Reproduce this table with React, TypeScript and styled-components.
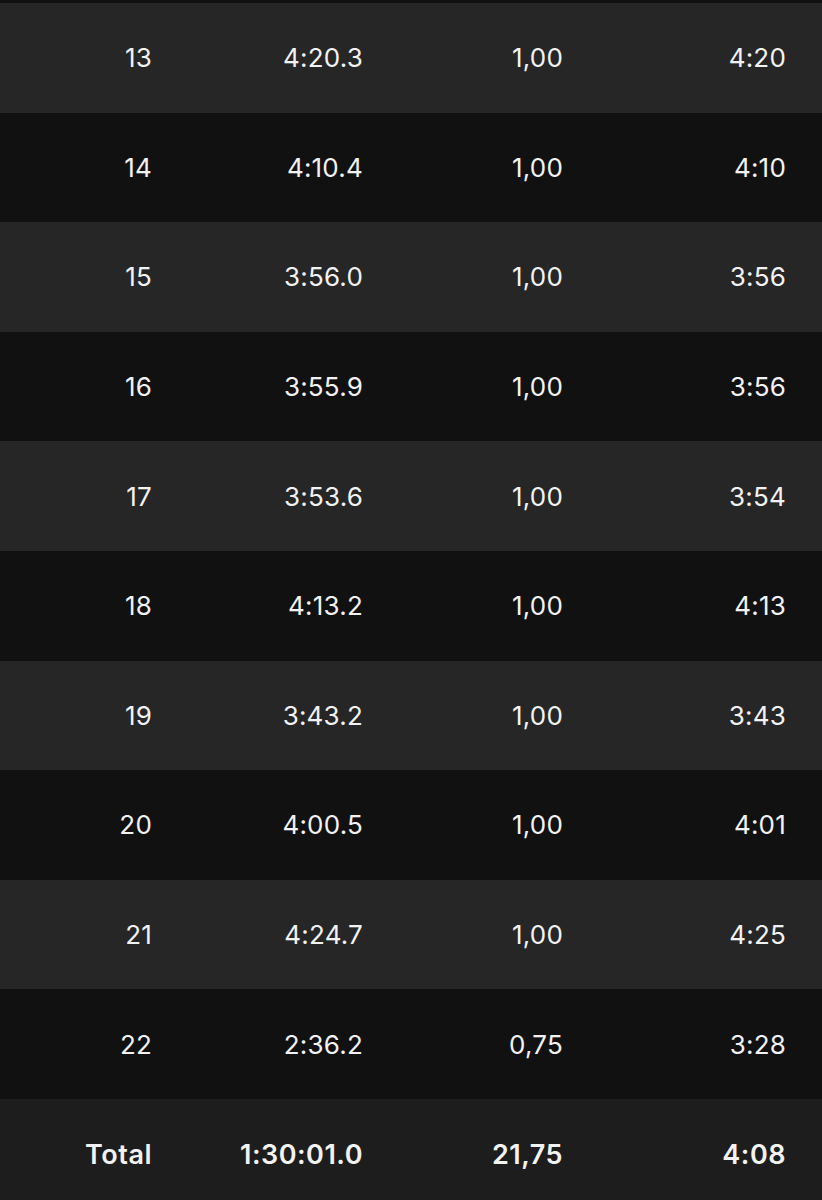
import React from 'react';
import styled, { createGlobalStyle } from 'styled-components';

const GlobalStyle = createGlobalStyle`
  html, body {
    margin: 0;
    padding: 0;
    background: #111111;
  }
  body {
    font-family: Inter, "Liberation Sans", sans-serif;
    -webkit-font-smoothing: antialiased;
  }
`;

const Table = styled.div`
  width: 822px;
  height: 1200px;
  overflow: hidden;
  padding-top: 3px;
  box-sizing: border-box;
  background: #111111;
`;

const Row = styled.div<{ $shade: 'light' | 'dark' | 'total' }>`
  display: grid;
  grid-template-columns: 152px 211px 200px 223px;
  align-items: center;
  height: ${({ $shade }) => ($shade === 'total' ? '112px' : '109.6px')};
  background: ${({ $shade }) => {
    if ($shade === 'light') return '#262626';
    if ($shade === 'total') return '#1d1d1d';
    return '#111111';
  }};
`;

const Cell = styled.div<{ $bold?: boolean }>`
  text-align: right;
  color: #f2f2f2;
  font-size: ${({ $bold }) => ($bold ? '27px' : '26px')};
  font-weight: ${({ $bold }) => ($bold ? 600 : 400)};
  letter-spacing: ${({ $bold }) => ($bold ? '0.5px' : '0.2px')};
`;

const splits = [
  ['13', '4:20.3', '1,00', '4:20'],
  ['14', '4:10.4', '1,00', '4:10'],
  ['15', '3:56.0', '1,00', '3:56'],
  ['16', '3:55.9', '1,00', '3:56'],
  ['17', '3:53.6', '1,00', '3:54'],
  ['18', '4:13.2', '1,00', '4:13'],
  ['19', '3:43.2', '1,00', '3:43'],
  ['20', '4:00.5', '1,00', '4:01'],
  ['21', '4:24.7', '1,00', '4:25'],
  ['22', '2:36.2', '0,75', '3:28'],
];

const App: React.FC = () => (
  <>
    <GlobalStyle />
    <Table>
      {splits.map((split, i) => (
        <Row key={split[0]} $shade={i % 2 === 0 ? 'light' : 'dark'}>
          {split.map((value, j) => (
            <Cell key={j}>{value}</Cell>
          ))}
        </Row>
      ))}
      <Row $shade="total">
        <Cell $bold>Total</Cell>
        <Cell $bold>1:30:01.0</Cell>
        <Cell $bold>21,75</Cell>
        <Cell $bold>4:08</Cell>
      </Row>
    </Table>
  </>
);

export default App;
